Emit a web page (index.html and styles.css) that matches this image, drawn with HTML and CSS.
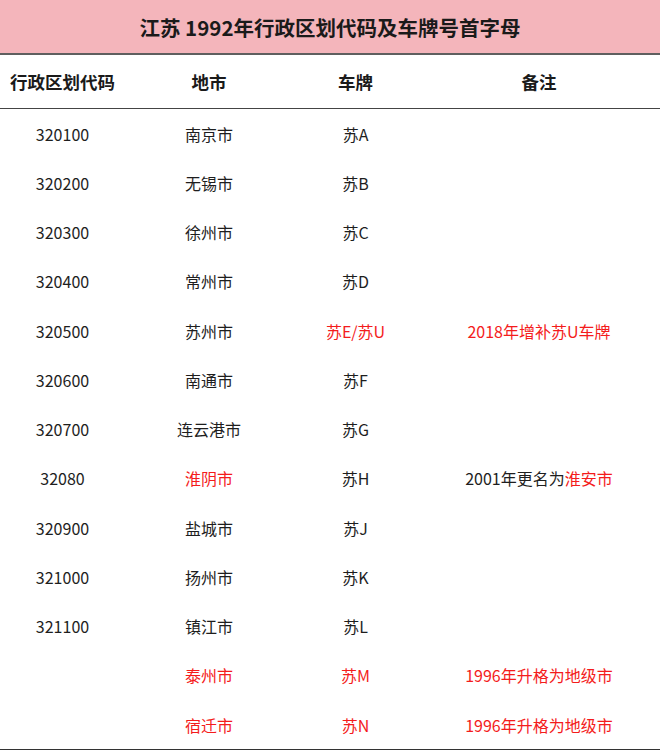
FILE: index.html
```html
<!DOCTYPE html>
<html lang="zh-CN">
<head>
<meta charset="utf-8">
<title>江苏 1992年行政区划代码及车牌号首字母</title>
<link rel="stylesheet" href="styles.css">
</head>
<body>
<div class="sheet">
  <div class="title">江苏 1992年行政区划代码及车牌号首字母</div>
  <div class="row head">
    <div>行政区划代码</div><div>地市</div><div>车牌</div><div>备注</div>
  </div>
  <div class="body">
    <div class="row"><div>320100</div><div>南京市</div><div>苏A</div><div></div></div>
    <div class="row"><div>320200</div><div>无锡市</div><div>苏B</div><div></div></div>
    <div class="row"><div>320300</div><div>徐州市</div><div>苏C</div><div></div></div>
    <div class="row"><div>320400</div><div>常州市</div><div>苏D</div><div></div></div>
    <div class="row"><div>320500</div><div>苏州市</div><div class="red">苏E/苏U</div><div class="red">2018年增补苏U车牌</div></div>
    <div class="row"><div>320600</div><div>南通市</div><div>苏F</div><div></div></div>
    <div class="row"><div>320700</div><div>连云港市</div><div>苏G</div><div></div></div>
    <div class="row"><div>32080</div><div class="red">淮阴市</div><div>苏H</div><div>2001年更名为<span class="red">淮安市</span></div></div>
    <div class="row"><div>320900</div><div>盐城市</div><div>苏J</div><div></div></div>
    <div class="row"><div>321000</div><div>扬州市</div><div>苏K</div><div></div></div>
    <div class="row"><div>321100</div><div>镇江市</div><div>苏L</div><div></div></div>
    <div class="row"><div></div><div class="red">泰州市</div><div class="red">苏M</div><div class="red">1996年升格为地级市</div></div>
    <div class="row"><div></div><div class="red">宿迁市</div><div class="red">苏N</div><div class="red">1996年升格为地级市</div></div>
  </div>
</div>
</body>
</html>
```

FILE: styles.css
```css
html, body {
  margin: 0;
  padding: 0;
  background: #ffffff;
}
body {
  font-family: "Noto Sans CJK SC", "Noto Sans", sans-serif;
  color: #1e1e1e;
}
.sheet {
  width: 660px;
}
.title {
  height: 53px;
  background: #f4b5bb;
  border-bottom: 2px solid #5f5f5f;
  display: flex;
  align-items: center;
  justify-content: center;
  font-size: 20.5px;
  font-weight: 700;
  color: #1a1a1a;
}
.row {
  display: grid;
  grid-template-columns: 125px 168px 125px 242px;
  height: 49.25px;
  align-items: center;
  font-size: 16px;
}
.row > div {
  text-align: center;
  white-space: nowrap;
}
.head {
  height: 53px;
  border-bottom: 1.5px solid #444;
  font-size: 17.5px;
  font-weight: 700;
  color: #1a1a1a;
}
.body {
  border-bottom: 2px solid #333;
}
.red {
  color: #f41c1c;
}
```
